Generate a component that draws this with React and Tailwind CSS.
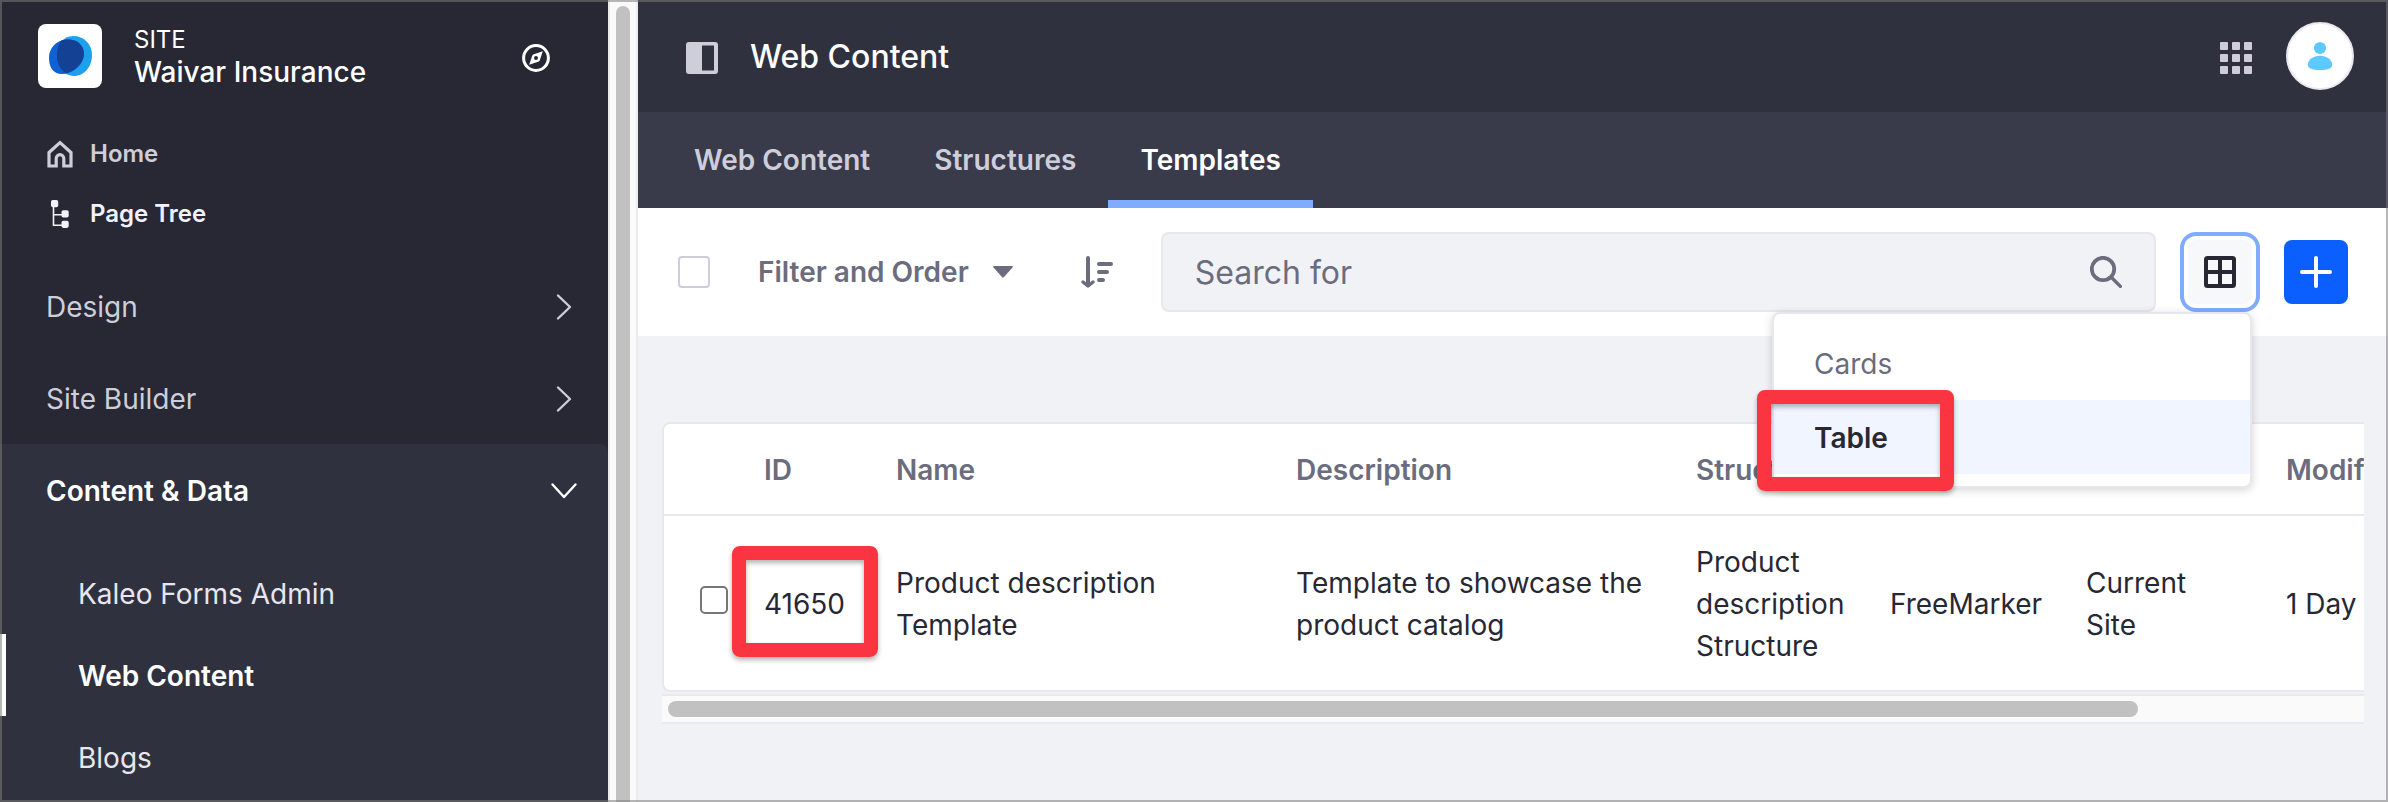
import React from "react";

function SiteLogo() {
  return (
    <svg viewBox="0 0 64 64" className="size-16 shrink-0 rounded-lg bg-white" aria-hidden="true">
      <path d="M35 12C46 12 54 20 54 31C54 43 46 52 36 52C26 52 19 43 19 33C19 21 25 12 35 12Z" fill="#1da1ec" />
      <path d="M29 15.500C39 15 46 21 46 30C46 40 36 50 24 50C15 50 11 43 11 34C11 24 18 16 29 15.500Z" fill="#0f62d2" />
      <path d="M23.200 16.500C25 15.800 27 15.600 29 15.500C39 15 46 21 46 30C46 37.500 38 46.500 28.300 49.300C22.500 46 19 39.500 19 33C19 26 20 20.500 23.200 16.500Z" fill="#144193" />
    </svg>
  );
}

function CompassIcon() {
  return (
    <svg viewBox="0 0 28 28" className="size-7" aria-hidden="true">
      <circle cx="14" cy="14" r="12.400" fill="none" stroke="#fff" strokeWidth="3" />
      <path fillRule="evenodd" fill="#fff" d="M20.800 7.200L17.800 16.200Q17.400 17.400 16.200 17.800L7.200 20.800L10.200 11.800Q10.600 10.600 11.800 10.200ZM14 12A2 2 0 1 0 14 16A2 2 0 1 0 14 12Z" />
    </svg>
  );
}

function HomeIcon() {
  return (
    <svg viewBox="0 0 28 28" className="size-7" aria-hidden="true">
      <path d="M3 12.500L14 2.600L25 12.500V26H17.800V18.500A3.800 3.800 0 0 0 10.200 18.500V26H3Z" fill="none" stroke="#cdced9" strokeWidth="3.200" />
    </svg>
  );
}

function TreeIcon() {
  return (
    <svg viewBox="0 0 28 28" className="size-7" aria-hidden="true">
      <path d="M7.500 4V25.200H18M7.500 14.800H18" fill="none" stroke="#f1f2f5" strokeWidth="1.600" />
      <g fill="#f1f1ff">
        <rect x="5" y="0" width="7.200" height="7.200" rx="1.800" />
        <rect x="15.500" y="10.300" width="7.200" height="7.200" rx="1.800" />
        <rect x="15.500" y="20.700" width="7.200" height="7.200" rx="1.800" />
      </g>
    </svg>
  );
}

function ChevronIcon({ open }) {
  return (
    <svg viewBox="0 0 28 28" className="size-7" fill="none" strokeWidth="2.400" strokeLinecap="round" strokeLinejoin="round" aria-hidden="true">
      {open ? <path d="M2.500 7.500L14 20L25.500 7.500" stroke="#fff" /> : <path d="M8 2.500L20 14L8 25.500" stroke="#cdced9" />}
    </svg>
  );
}

function PanelIcon() {
  return (
    <svg viewBox="0 0 32 32" className="size-8" aria-hidden="true">
      <path fillRule="evenodd" fill="#cdced9" d="M3 0H29Q32 0 32 3V29Q32 32 29 32H3Q0 32 0 29V3Q0 0 3 0ZM16 3.500V28.500H28V3.500Z" />
    </svg>
  );
}

function AppsIcon() {
  return (
    <svg viewBox="0 0 32 32" className="size-8" fill="#cdced9" aria-hidden="true">
      {[0, 12, 24].map((y) => [0, 12, 24].map((x) => <rect key={`${x}-${y}`} x={x} y={y} width="8" height="8" rx="1" />))}
    </svg>
  );
}

function UserIcon() {
  return (
    <svg viewBox="0 0 32 32" className="size-8" fill="#5fc8ff" aria-hidden="true">
      <circle cx="16" cy="8" r="6.100" />
      <path d="M16 15.700C22.500 15.700 28.200 19.500 28.200 24.800C28.200 28.500 24 30 16 30C8 30 3.800 28.500 3.800 24.800C3.800 19.500 9.500 15.700 16 15.700Z" />
    </svg>
  );
}

function CaretIcon() {
  return (
    <svg viewBox="0 0 20 12" className="h-3 w-5" aria-hidden="true">
      <path d="M1 0H19Q20.500 0.300 19.500 1.500L11 11Q10 12 9 11L0.500 1.500Q-0.500 0.300 1 0Z" fill="#6b6c7e" />
    </svg>
  );
}

function SortIcon() {
  return (
    <svg viewBox="0 0 32 32" className="size-8" fill="none" stroke="#6b6c7e" strokeWidth="4" strokeLinecap="round" strokeLinejoin="round" aria-hidden="true">
      <path d="M7 2V29" />
      <path d="M2 26L7 30L12 26" strokeWidth="3.400" />
      <path d="M18 8H30M18 16H26M18 24H22" />
    </svg>
  );
}

function SearchIcon() {
  return (
    <svg viewBox="0 0 32 32" className="size-8 shrink-0" fill="none" stroke="#6b6c7e" strokeLinecap="round" aria-hidden="true">
      <circle cx="13" cy="13" r="11.200" strokeWidth="3.800" />
      <path d="M21.500 21.500L30.400 30.400" strokeWidth="3.400" />
    </svg>
  );
}

function TableIcon() {
  return (
    <svg viewBox="0 0 32 32" className="size-8" aria-hidden="true">
      <rect x="2" y="2" width="28" height="28" rx="1.500" fill="#f7f8f9" stroke="#272833" strokeWidth="4" />
      <path d="M16 2V30M2 16H30" stroke="#272833" strokeWidth="4" />
    </svg>
  );
}

function PlusIcon() {
  return (
    <svg viewBox="0 0 32 32" className="size-8" stroke="#fff" strokeWidth="4" strokeLinecap="round" aria-hidden="true">
      <path d="M16 2V30M2 16H30" />
    </svg>
  );
}

function Sidebar() {
  return (
    <aside className="w-[608px] shrink-0 bg-[#272833]">
      <header className="mb-9 flex items-center pt-6 pr-[58px] pl-[38px]">
        <SiteLogo />
        <div className="ml-8 flex-1 text-white">
          <p className="text-2xl leading-8">SITE</p>
          <p className="text-[28px] leading-8 font-medium">Waivar Insurance</p>
        </div>
        <button type="button" aria-label="Go to other site" className="pt-1">
          <CompassIcon />
        </button>
      </header>
      <nav className="text-[28px]">
        <a href="#home" className="flex h-[60px] items-center gap-4 pl-[46px] text-2xl font-semibold text-[#cdced9]">
          <HomeIcon />
          Home
        </a>
        <a href="#page-tree" className="mb-4 flex h-[60px] items-center gap-4 pl-[46px] text-2xl font-semibold text-[#f1f1ff]">
          <TreeIcon />
          Page Tree
        </a>
        {["Design", "Site Builder"].map((label) => (
          <button key={label} type="button" className="flex h-[92px] w-full items-center justify-between pt-0.5 pr-[30px] pl-[46px] text-[#cdced9]">
            {label}
            <ChevronIcon />
          </button>
        ))}
        <section className="rounded-tr-lg bg-[#30313f]">
          <button type="button" className="mb-4 flex h-[92px] w-full items-center justify-between pt-0.5 pr-[30px] pl-[46px] font-semibold text-white">
            Content &amp; Data
            <ChevronIcon open />
          </button>
          <a href="#kaleo" className="flex h-[82px] items-center pt-0.5 pl-[78px] text-[#e7e7ed]">Kaleo Forms Admin</a>
          <a href="#web-content" className="flex h-[82px] items-center border-l-[6px] border-white pt-0.5 pl-[72px] font-semibold text-white">Web Content</a>
          <a href="#blogs" className="flex h-[82px] items-center pt-0.5 pl-[78px] text-[#e7e7ed]">Blogs</a>
          <div className="h-1" />
        </section>
      </nav>
    </aside>
  );
}

function Highlight({ className }) {
  return (
    <span
      className={`pointer-events-none absolute z-20 rounded-lg border-[14px] border-[#fa3541] shadow-[0_3px_5px_rgba(0,0,0,0.3),inset_0_3px_5px_rgba(0,0,0,0.3)] ${className}`}
    />
  );
}

function Toolbar() {
  return (
    <div className="flex h-32 items-center gap-12 bg-white px-10 text-[#6b6c7e]">
      <input type="checkbox" aria-label="Select all items" className="size-8 shrink-0 appearance-none rounded border-2 border-[#cdced9] bg-white" />
      <button type="button" className="mr-5 flex shrink-0 items-center gap-6 text-[28px] font-semibold">
        Filter and Order
        <CaretIcon />
      </button>
      <button type="button" aria-label="Reverse sort direction" className="shrink-0">
        <SortIcon />
      </button>
      <div className="flex min-w-0 flex-1 items-center gap-8">
        <label className="flex h-20 min-w-0 flex-1 items-center rounded-lg border-2 border-[#e7e7ed] bg-[#f1f2f5] px-8">
          <input type="text" aria-label="Search for" placeholder="Search for" className="min-w-0 flex-1 bg-transparent pt-0.5 text-[32px] outline-none placeholder:text-[#6b6c7e] placeholder:opacity-100" />
          <button type="button" aria-label="Search">
            <SearchIcon />
          </button>
        </label>
        <div className="relative">
          <button type="button" aria-label="Select view" className="flex size-16 items-center justify-center rounded-lg bg-[#f7f8f9] ring-4 ring-[#80acff] ring-offset-4 ring-offset-white">
            <TableIcon />
          </button>
          <div className="absolute top-[72px] right-0 z-10 w-[480px] rounded-lg border-2 border-[#e7e7ed] bg-white py-3 text-[28px] shadow-[0_2px_8px_rgba(39,40,51,0.2)]">
            <button type="button" className="flex h-[74px] w-full items-center px-10 pt-0.5">Cards</button>
            <div className="relative">
              <button type="button" className="flex h-[74px] w-full items-center bg-[#f0f5ff] px-10 pt-0.5 font-semibold text-[#272833]">Table</button>
              <Highlight className="-top-2.5 -left-[17px] h-[101px] w-[197px]" />
            </div>
          </div>
        </div>
        <button type="button" aria-label="Add" className="flex size-16 items-center justify-center rounded-lg bg-[#0b5fff]">
          <PlusIcon />
        </button>
      </div>
    </div>
  );
}

function TemplateTable() {
  return (
    <div>
      <div className="overflow-hidden rounded-l-lg">
        <table className="w-[1954px] table-fixed border-separate border-spacing-0 rounded-lg border-2 border-[#e7e7ed] bg-white text-left text-[28px] leading-[42px] text-[#272833]">
          <colgroup>
            <col className="w-[100px]" />
            <col className="w-[132px]" />
            <col className="w-[400px]" />
            <col className="w-[400px]" />
            <col className="w-[194px]" />
            <col className="w-[196px]" />
            <col className="w-[200px]" />
            <col />
          </colgroup>
          <thead>
            <tr className="h-[92px] text-[#6b6c7e] *:border-b-2 *:border-[#e7e7ed] *:px-0 *:pt-0.5 *:pb-0 *:font-semibold">
              <th aria-label="Selection" />
              <th>ID</th>
              <th>Name</th>
              <th>Description</th>
              <th>Structure</th>
              <th>Language</th>
              <th>Scope</th>
              <th>Modified Date</th>
            </tr>
          </thead>
          <tbody>
            <tr className="h-[174px] *:px-0 *:pb-0">
              <td>
                <input type="checkbox" aria-label="Select 41650" className="mb-1.5 ml-9 block size-7 appearance-none rounded-[5px] border-2 border-[#767676] bg-white" />
              </td>
              <td className="relative pt-0.5">
                41650
                <Highlight className="top-[30px] -left-[32px] h-[111px] w-[146px]" />
              </td>
              <td className="pt-0.5"><p className="w-[300px]">Product description Template</p></td>
              <td className="pt-0.5"><p className="w-[360px]">Template to showcase the product catalog</p></td>
              <td className="pt-0.5"><p className="w-[160px]">Product description Structure</p></td>
              <td className="pt-0.5">FreeMarker</td>
              <td className="pt-0.5"><p className="w-[130px]">Current Site</p></td>
              <td className="pt-0.5">1 Day</td>
            </tr>
          </tbody>
        </table>
      </div>
      <div className="mt-0.5 border-y-2 border-[#e9e9e9] bg-[#fafafa] px-1.5 py-[5px]">
        <div className="h-4 w-[87%] rounded-full bg-[#c1c1c1]" />
      </div>
    </div>
  );
}

export default function App() {
  return (
    <div className="relative flex min-h-screen overflow-hidden bg-[#f1f2f5] font-['Inter',sans-serif]">
      <Sidebar />
      <div className="flex w-[30px] shrink-0 border-x-2 border-[#ececec] bg-[#fafafa] px-1.5 pt-1.5">
        <div className="w-4 rounded-t-full bg-[#c1c1c1]" />
      </div>
      <main className="min-w-0 flex-1">
        <header className="flex h-28 items-center bg-[#30313f] pr-[34px] pl-12">
          <button type="button" aria-label="Toggle product menu" className="pt-1">
            <PanelIcon />
          </button>
          <h1 className="ml-8 flex-1 pt-0.5 text-[32px] font-medium text-white">Web Content</h1>
          <button type="button" aria-label="Applications" className="pt-1">
            <AppsIcon />
          </button>
          <button type="button" aria-label="User profile" className="ml-[34px] flex size-[68px] items-center justify-center rounded-full border-2 border-[#e7e7ed] bg-white">
            <UserIcon />
          </button>
        </header>
        <nav className="flex h-24 bg-[#393a4a] pl-6 text-[28px] font-semibold text-[#cdced9]">
          <a href="#articles" className="flex items-center px-8">Web Content</a>
          <a href="#structures" className="flex items-center px-8">Structures</a>
          <a href="#templates" className="flex items-center border-b-8 border-[#80acff] px-8 pt-2 text-white">Templates</a>
        </nav>
        <Toolbar />
        <div className="px-6 pt-[86px]">
          <TemplateTable />
        </div>
      </main>
      <div className="pointer-events-none absolute inset-0 z-30 border-2 border-[#7b7b7b]/55" />
    </div>
  );
}
